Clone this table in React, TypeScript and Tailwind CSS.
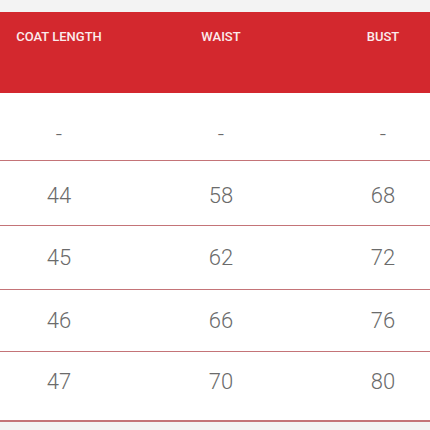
const headers = ['COAT LENGTH', 'WAIST', 'BUST']

const rows = [
  { values: ['-', '-', '-'], height: 'h-[68px]', pad: 'pt-[28px]' },
  { values: ['44', '58', '68'], height: 'h-[65px]', pad: 'pt-[21px]' },
  { values: ['45', '62', '72'], height: 'h-[64px]', pad: 'pt-[18px]' },
  { values: ['46', '66', '76'], height: 'h-[62px]', pad: 'pt-[17px]' },
  { values: ['47', '70', '80'], height: 'h-[68px]', pad: 'pt-[16px]' },
]

export default function App() {
  return (
    <div className="w-[430px] h-[430px] overflow-hidden bg-[#f3f3f3] font-['Roboto',sans-serif]">
      <div className="h-[12px]" />
      <div className="w-[486px] -ml-[22px] bg-white border-b-2 border-[#c47478]">
        <div className="grid grid-cols-3 h-[81px] pt-[17px] bg-[#d3282e]">
          {headers.map((h) => (
            <div key={h} className="text-center text-[13px] leading-4 font-medium text-[#fbecec]">
              {h}
            </div>
          ))}
        </div>
        {rows.map((row, i) => (
          <div
            key={i}
            className={`grid grid-cols-3 ${row.height} ${row.pad} ${
              i < rows.length - 1 ? 'border-b border-[#c47478]' : ''
            }`}
          >
            {row.values.map((v, j) => (
              <div key={j} className="text-center text-[22px] leading-7 font-light text-[#6b6b6b]">
                {v}
              </div>
            ))}
          </div>
        ))}
      </div>
    </div>
  )
}
